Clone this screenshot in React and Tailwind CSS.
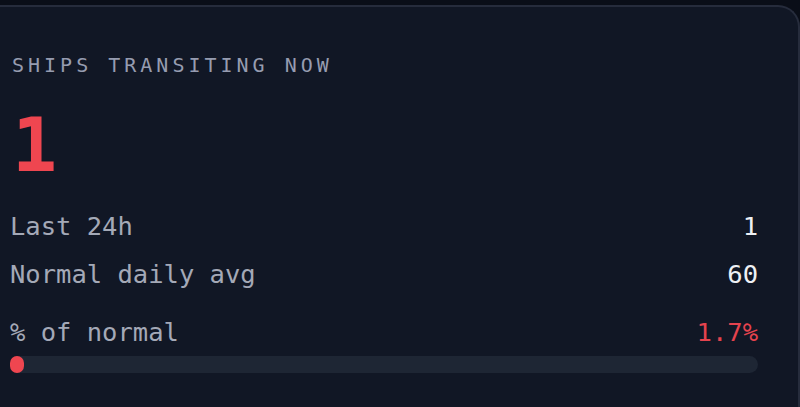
const rows = [
  { label: "Last 24h", value: "1", tone: "text-[#eef0f4]" },
  { label: "Normal daily avg", value: "60", tone: "text-[#eef0f4]" },
];

export default function App() {
  const pct = 1.7;
  return (
    <div className="h-[407px] w-[800px] overflow-hidden bg-[#0a0e18] pt-[5px] font-['DejaVu_Sans_Mono','Liberation_Mono',monospace]">
      <div className="h-full rounded-tr-[22px] border-t-2 border-r-2 border-[#262c3c] bg-[#111725] pl-[10px] pr-[40px] pt-[46px]">
        <div className="pl-[2px] text-[20px] leading-[24px] tracking-[0.2em] text-[#969cb0]">
          SHIPS TRANSITING NOW
        </div>
        <div className="mt-[31px] pl-[2px] text-[75px] font-bold leading-[75px] text-[#ef4650]">
          1
        </div>
        <div className="mt-[27px] flex flex-col gap-[16px]">
          {rows.map((r) => (
            <div key={r.label} className="flex items-center justify-between text-[25.5px] leading-[32px]">
              <span className="text-[#a4a9b7]">{r.label}</span>
              <span className={r.tone}>{r.value}</span>
            </div>
          ))}
        </div>
        <div className="mt-[26px] flex items-center justify-between text-[25.5px] leading-[32px]">
          <span className="text-[#a4a9b7]">% of normal</span>
          <span className="text-[#e5434e]">{pct}%</span>
        </div>
        <div className="mt-[8px] h-[17px] w-full rounded-full bg-[#1e2634]">
          <div className="h-full w-[14px] rounded-full bg-[#ef4650]" style={{ minWidth: `${pct}%` }} />
        </div>
      </div>
    </div>
  );
}
